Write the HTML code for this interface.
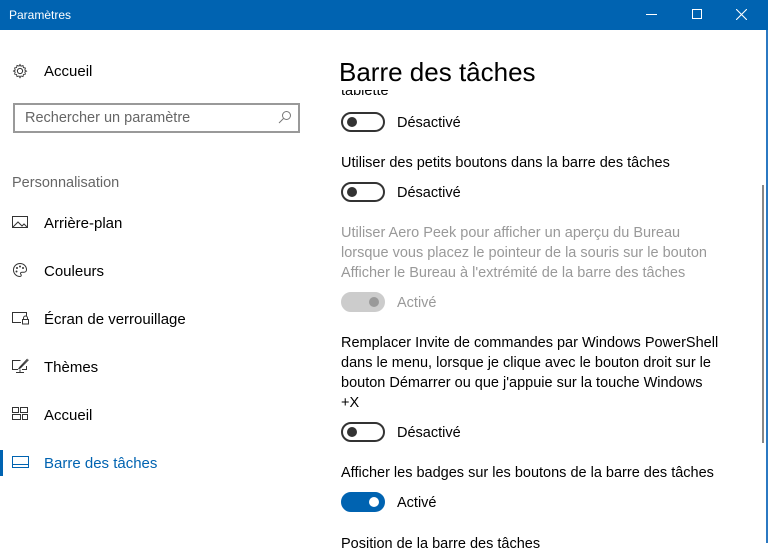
<!DOCTYPE html>
<html><head><meta charset="utf-8"><style>
*{margin:0;padding:0;box-sizing:border-box}
body{width:768px;height:543px;overflow:hidden;background:#fff;font-family:"Liberation Sans",sans-serif;color:#000;position:relative}
.tb{position:absolute;left:0;top:0;width:768px;height:30px;background:#0063b1;color:#fff;font-size:12px}
.tb .t{position:absolute;left:9px;top:8px}
.abs{position:absolute}
.nav{position:absolute;left:44px;font-size:15px;color:#000}
.ic{position:absolute;left:12px}
.p{position:absolute;left:341px;font-size:14.5px;line-height:20px;color:#000}
.g{color:#999}
.tog{position:absolute;left:341px;width:44px;height:20px;border:2px solid #333;border-radius:10px}
.tog i{position:absolute;left:4px;top:3px;width:10px;height:10px;border-radius:5px;background:#333}
.lab{position:absolute;left:397px;font-size:14.5px}
</style></head><body>
<div class="tb"><span class="t">Paramètres</span>
<div class="abs" style="left:646px;top:14px;width:11px;height:1px;background:#fff"></div>
<div class="abs" style="left:692px;top:9px;width:10px;height:10px;border:1px solid #fff"></div>
<svg class="abs" style="left:736px;top:9px" width="11" height="11"><path d="M0 0L11 11M11 0L0 11" stroke="#fff" stroke-width="1.1"/></svg>
</div>
<div class="abs" style="left:766px;top:30px;width:2px;height:513px;background:#2b79c2"></div>
<div class="abs" style="left:762px;top:185px;width:2px;height:258px;background:#888"></div>

<svg class="ic" style="top:63px" width="16" height="16" viewBox="0 0 16 16"><circle cx="8" cy="8" r="2.6" fill="none" stroke="#333"/><path d="M8 1.5l1 1.7 2-.6.4 2 2 .5-.6 2 1.7 1-1.7 1 .6 2-2 .5-.4 2-2-.6-1 1.7-1-1.7-2 .6-.4-2-2-.5.6-2L1.5 8l1.7-1-.6-2 2-.5.4-2 2 .6z" fill="none" stroke="#333" stroke-width=".9"/></svg>
<div class="nav" style="top:63px">Accueil</div>
<div class="abs" style="left:13px;top:103px;width:287px;height:30px;border:2px solid #999"></div>
<div class="abs" style="left:25px;top:110px;font-size:14.5px;color:#666">Rechercher un paramètre</div>
<svg class="abs" style="left:278px;top:110px" width="14" height="14"><circle cx="8.5" cy="5.5" r="4" fill="none" stroke="#777"/><path d="M5.5 8.5L1 13" stroke="#777"/></svg>
<div class="abs" style="left:12px;top:175px;font-size:14.5px;color:#666">Personnalisation</div>

<svg class="ic" style="top:215px" width="16" height="14"><rect x=".5" y="1.5" width="15" height="11" fill="none" stroke="#333"/><path d="M1 12l5-5 4 4 2-2 3 3" fill="none" stroke="#333"/></svg>
<div class="nav" style="top:215px">Arrière-plan</div>
<svg class="ic" style="top:262px" width="16" height="16"><path d="M8 1.5a6.5 6.5 0 1 0 0 13c1.5 0 1.5-1.5.8-2.3-.8-1 0-2 1.2-2h2a2.5 2.5 0 0 0 2.5-2.5C14.5 4 11.5 1.5 8 1.5z" fill="none" stroke="#333"/><circle cx="5" cy="6" r="1" fill="#333"/><circle cx="8" cy="4.5" r="1" fill="#333"/><circle cx="11" cy="6" r="1" fill="#333"/><circle cx="4.5" cy="9.5" r="1" fill="#333"/></svg>
<div class="nav" style="top:263px">Couleurs</div>
<svg class="ic" style="top:311px" width="18" height="14"><path d="M9 11.5H.5v-10h14v4" fill="none" stroke="#333"/><rect x="10.5" y="8.5" width="6" height="4.5" fill="none" stroke="#333"/><path d="M11.5 8.5v-1.5a2 2 0 0 1 4 0v1.5" fill="none" stroke="#333"/></svg>
<div class="nav" style="top:311px">Écran de verrouillage</div>
<svg class="ic" style="top:358px" width="17" height="16"><path d="M6 11.5H.5v-9h8M14.5 8v3.5H10M4 14.5h8M8 11.5v3" fill="none" stroke="#333"/><path d="M15.5 1L8 9l-1.5 2 2-1.2 8-8" fill="none" stroke="#333"/></svg>
<div class="nav" style="top:359px">Thèmes</div>
<svg class="ic" style="top:407px" width="16" height="14"><rect x=".5" y=".5" width="6" height="5" fill="none" stroke="#333"/><rect x="8.5" y=".5" width="7" height="5" fill="none" stroke="#333"/><rect x=".5" y="7.5" width="8" height="5" fill="none" stroke="#333"/><rect x="10.5" y="7.5" width="5" height="5" fill="none" stroke="#333"/></svg>
<div class="nav" style="top:407px">Accueil</div>
<div class="abs" style="left:0;top:450px;width:3px;height:26px;background:#0063b1"></div>
<svg class="ic" style="top:456px" width="17" height="12"><rect x=".5" y=".5" width="16" height="11" fill="none" stroke="#0063b1"/><path d="M1 8.5h15" stroke="#0063b1"/></svg>
<div class="nav" style="top:455px;color:#0063b1">Barre des tâches</div>

<div class="p" style="top:81px;clip-path:inset(9px 0 0 0)">tablette</div>
<div class="abs" style="left:339px;top:57px;font-size:26px">Barre des tâches</div>
<div class="tog" style="top:112px"><i></i></div><div class="lab" style="top:115px">Désactivé</div>
<div class="p" style="top:153px">Utiliser des petits boutons dans la barre des tâches</div>
<div class="tog" style="top:182px"><i></i></div><div class="lab" style="top:185px">Désactivé</div>
<div class="p g" style="top:223px">Utiliser Aero Peek pour afficher un aperçu du Bureau<br>lorsque vous placez le pointeur de la souris sur le bouton<br>Afficher le Bureau à l'extrémité de la barre des tâches</div>
<div class="tog" style="top:292px;border-color:#ccc;background:#ccc"><i style="left:26px;background:#999"></i></div><div class="lab g" style="top:295px">Activé</div>
<div class="p" style="top:333px">Remplacer Invite de commandes par Windows PowerShell<br>dans le menu, lorsque je clique avec le bouton droit sur le<br>bouton Démarrer ou que j'appuie sur la touche Windows<br>+X</div>
<div class="tog" style="top:422px"><i></i></div><div class="lab" style="top:425px">Désactivé</div>
<div class="p" style="top:463px">Afficher les badges sur les boutons de la barre des tâches</div>
<div class="tog" style="top:492px;border-color:#0063b1;background:#0063b1"><i style="left:26px;background:#fff"></i></div><div class="lab" style="top:495px">Activé</div>
<div class="p" style="top:534px">Position de la barre des tâches</div>
</body></html>
